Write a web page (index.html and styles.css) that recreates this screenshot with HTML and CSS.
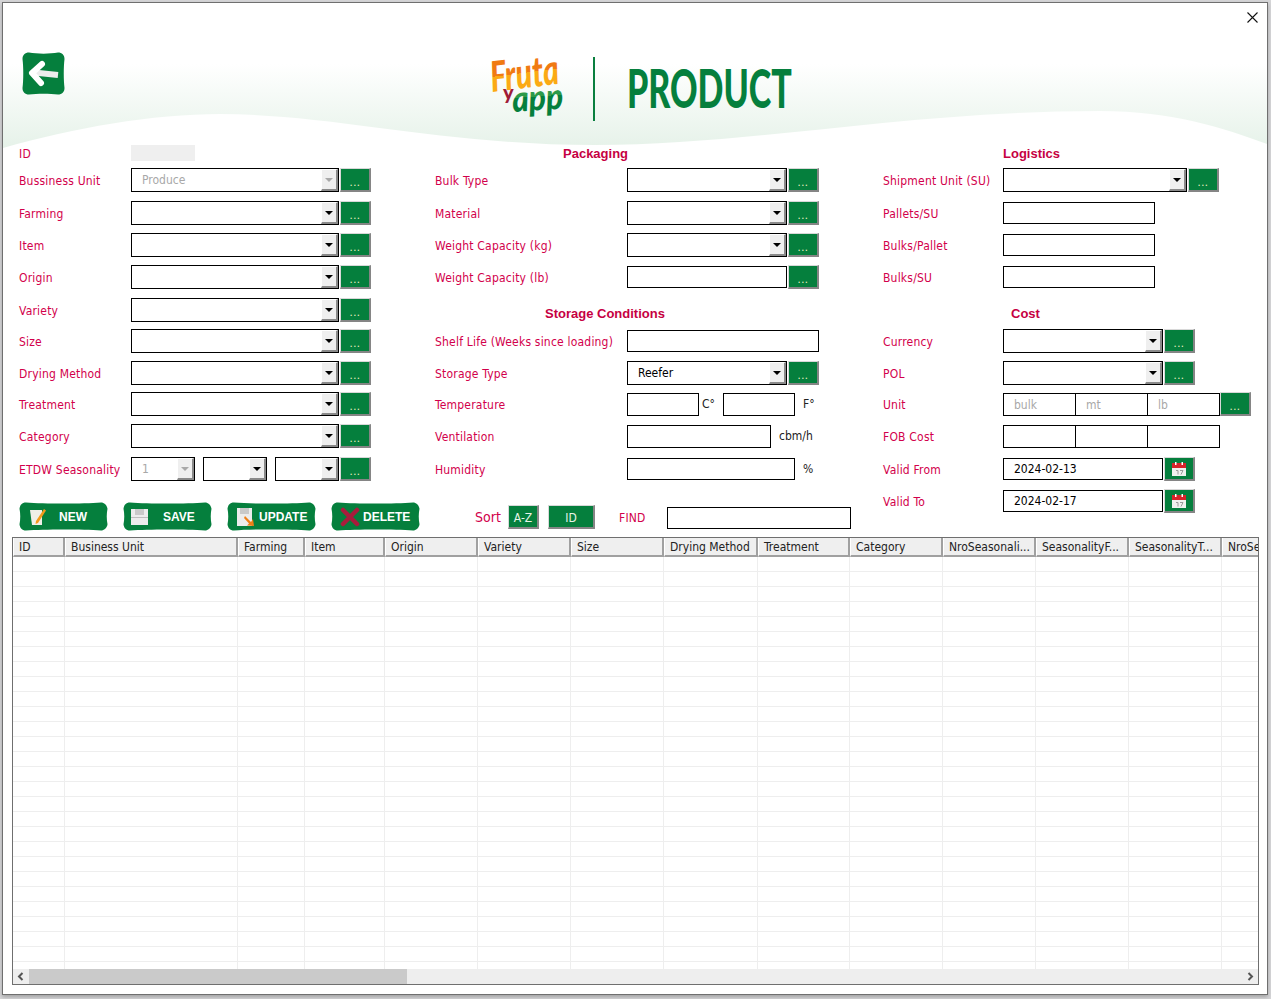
FILE: index.html
```html
<!DOCTYPE html>
<html lang="en">
  <head>
    <meta charset="UTF-8" />
    <title>Product</title>
    <link rel="stylesheet" href="styles.css">
  </head>
  <body>
    <svg class="defs" width="0" height="0">
      <symbol id="btn-shape" viewBox="0 0 89 30" preserveAspectRatio="none">
        <path d="M7 0.5C25 2 64 2 82 0.5C85 0.5 88 3 88.5 7C87.5 12 87.5 18 88.5 23C88 27 85 29.5 82 29.5C64 28 25 28 7 29.5C3 29.5 1 27 0.5 23C1.5 18 1.5 12 0.5 7C1 3 3 0.5 7 0.5Z" fill="#057f3d"/>
      </symbol>
      <symbol id="cal" viewBox="0 0 16 16">
        <rect x="1" y="2" width="14" height="13" fill="#f1f1ee"/>
        <rect x="1" y="2" width="14" height="5" fill="#d8232a"/>
        <rect x="4" y="1" width="1.5" height="3" fill="#fff"/>
        <rect x="10.5" y="1" width="1.5" height="3" fill="#fff"/>
        <path d="M5 9.5h2v4M9 9.5h3l-2 4" fill="none" stroke="#9a9a9a" stroke-width="1"/>
      </symbol>
    </svg>

    <div class="window">
      <button class="close" aria-label="Close">
        <svg width="11" height="11" viewBox="0 0 11 11"><path d="M0.5 0.5L10.5 10.5M10.5 0.5L0.5 10.5" stroke="#111" stroke-width="1.1"/></svg>
      </button>

      <header class="header">
        <svg class="wave" width="1264" height="146" viewBox="0 0 1264 146">
          <defs>
            <linearGradient id="wave-fill" x1="0" y1="0" x2="0" y2="1">
              <stop offset="0.42" stop-color="#ffffff"/>
              <stop offset="1" stop-color="#e6f2e9"/>
            </linearGradient>
          </defs>
          <path d="M0 145C70 125 150 111 217 111C330 111 440 142 592 142C750 142 900 108 1097 108C1170 108 1220 125 1264 141V0H0Z" fill="url(#wave-fill)"/>
        </svg>

        <a class="back" aria-label="Back">
          <svg width="43" height="43" viewBox="0 0 43 43">
            <path d="M7 0.5C15 2 28 2 36 0.5C40 0.5 42.5 3 42.5 7C41.5 15 41.5 28 42.5 36C42.5 40 40 42.5 36 42.5C28 41.5 15 41.5 7 42.5C3 42.5 0.5 40 0.5 36C1.5 28 1.5 15 0.5 7C0.5 3 3 0.5 7 0.5Z" fill="#057f3d"/>
            <path d="M36 23L12 20.5" stroke="#ececec" stroke-width="6" fill="none"/>
            <path d="M20 12L10 21L19 31" stroke="#fff" stroke-width="6" fill="none" stroke-linecap="round" stroke-linejoin="round"/>
          </svg>
        </a>

        <svg class="logo" width="76" height="76" viewBox="0 0 76 76">
          <defs>
            <linearGradient id="fruta-fill" x1="0" y1="0" x2="0" y2="1">
              <stop offset="0.52" stop-color="#f07a12"/>
              <stop offset="0.52" stop-color="#fbaa14"/>
            </linearGradient>
            <linearGradient id="app-fill" x1="0" y1="0" x2="0" y2="1">
              <stop offset="0.5" stop-color="#2d9a4a"/>
              <stop offset="0.5" stop-color="#057f3d"/>
            </linearGradient>
          </defs>
          <text class="logo-fruta" transform="translate(2 38) rotate(-7) scale(0.72 1)">Fruta</text>
          <text class="logo-y" x="13" y="46">y</text>
          <text class="logo-app" transform="translate(23 58) rotate(-4) scale(0.88 1)">app</text>
        </svg>
        <div class="divider"></div>
        <svg class="title" width="172" height="76" viewBox="0 0 172 76">
          <text transform="translate(0 60) scale(0.63 1)">PRODUCT</text>
        </svg>
      </header>

      <div class="form">
        <section class="col col-a">
          <label class="short">ID</label>
          <div class="ctl"><div class="id-box"></div></div>

          <label>Bussiness Unit</label>
          <div class="ctl"><div class="combo off w208"><span>Produce</span><i></i></div><button class="dots">...</button></div>
          <label>Farming</label>
          <div class="ctl"><div class="combo w208"><span></span><i></i></div><button class="dots">...</button></div>
          <label>Item</label>
          <div class="ctl"><div class="combo w208"><span></span><i></i></div><button class="dots">...</button></div>
          <label>Origin</label>
          <div class="ctl"><div class="combo w208"><span></span><i></i></div><button class="dots">...</button></div>
          <label>Variety</label>
          <div class="ctl"><div class="combo w208"><span></span><i></i></div><button class="dots">...</button></div>
          <label>Size</label>
          <div class="ctl"><div class="combo w208"><span></span><i></i></div><button class="dots">...</button></div>
          <label>Drying Method</label>
          <div class="ctl"><div class="combo w208"><span></span><i></i></div><button class="dots">...</button></div>
          <label>Treatment</label>
          <div class="ctl"><div class="combo w208"><span></span><i></i></div><button class="dots">...</button></div>
          <label>Category</label>
          <div class="ctl"><div class="combo w208"><span></span><i></i></div><button class="dots">...</button></div>
          <label>ETDW Seasonality</label>
          <div class="ctl">
            <div class="combo off w64"><span>1</span><i></i></div>
            <div class="combo w64 ml8"><span></span><i></i></div>
            <div class="combo w64 ml8"><span></span><i></i></div>
            <button class="dots">...</button>
          </div>
        </section>

        <section class="col col-b">
          <h3 class="head head-packaging">Packaging</h3>
          <label>Bulk Type</label>
          <div class="ctl"><div class="combo w160"><span></span><i></i></div><button class="dots">...</button></div>
          <label>Material</label>
          <div class="ctl"><div class="combo w160"><span></span><i></i></div><button class="dots">...</button></div>
          <label>Weight Capacity (kg)</label>
          <div class="ctl"><div class="combo w160"><span></span><i></i></div><button class="dots">...</button></div>
          <label>Weight Capacity (lb)</label>
          <div class="ctl"><input class="field w160"><button class="dots">...</button></div>
          <h3 class="head head-storage">Storage Conditions</h3>
          <label>Shelf Life (Weeks since loading)</label>
          <div class="ctl"><input class="field w192"></div>
          <label>Storage Type</label>
          <div class="ctl"><div class="combo w160"><span>Reefer</span><i></i></div><button class="dots">...</button></div>
          <label>Temperature</label>
          <div class="ctl"><input class="field tall w72"><span class="unit u-c">C°</span><input class="field tall w72"><span class="unit u-f">F°</span></div>
          <label>Ventilation</label>
          <div class="ctl"><input class="field tall w144"><span class="unit u-f">cbm/h</span></div>
          <label>Humidity</label>
          <div class="ctl"><input class="field w168"><span class="unit u-f">%</span></div>
        </section>

        <section class="col col-c">
          <h3 class="head head-logistics">Logistics</h3>
          <label>Shipment Unit (SU)</label>
          <div class="ctl"><div class="combo w184"><span></span><i></i></div><button class="dots">...</button></div>
          <label>Pallets/SU</label>
          <div class="ctl"><input class="field w152"></div>
          <label>Bulks/Pallet</label>
          <div class="ctl"><input class="field w152"></div>
          <label>Bulks/SU</label>
          <div class="ctl"><input class="field w152"></div>
          <h3 class="head head-cost">Cost</h3>
          <label>Currency</label>
          <div class="ctl"><div class="combo w160"><span></span><i></i></div><button class="dots">...</button></div>
          <label>POL</label>
          <div class="ctl"><div class="combo w160"><span></span><i></i></div><button class="dots">...</button></div>
          <label>Unit</label>
          <div class="ctl">
            <div class="triple"><input class="field tall" placeholder="bulk"><input class="field tall" placeholder="mt"><input class="field tall" placeholder="lb"></div>
            <button class="dots">...</button>
          </div>
          <label>FOB Cost</label>
          <div class="ctl">
            <div class="triple"><input class="field tall"><input class="field tall"><input class="field tall"></div>
          </div>
          <label>Valid From</label>
          <div class="ctl"><input class="field w160" value="2024-02-13"><button class="dots"><svg width="16" height="16"><use href="#cal"/></svg></button></div>
          <label>Valid To</label>
          <div class="ctl"><input class="field w160" value="2024-02-17"><button class="dots"><svg width="16" height="16"><use href="#cal"/></svg></button></div>
        </section>

        <div class="toolbar">
          <button class="action">
            <svg class="action-bg"><use href="#btn-shape"/></svg>
            <svg class="action-icon" width="20" height="20" viewBox="0 0 20 20">
              <path d="M2 3H14V18H4Z" fill="#efefe8"/>
              <path d="M16 2L18 3.5L10 16L7.5 17L8 14Z" fill="#f39a1c"/>
            </svg>
            <span class="action-new">NEW</span>
          </button>
          <button class="action">
            <svg class="action-bg"><use href="#btn-shape"/></svg>
            <svg class="action-icon icon-save" width="20" height="20" viewBox="0 0 20 20">
              <path d="M1 2H18V18H1Z" fill="#ececec"/>
              <path d="M5 2H14V8H5Z" fill="#c9c9c9"/>
              <path d="M1 10H18V11H1Z" fill="#bdbdbd"/>
            </svg>
            <span class="action-save">SAVE</span>
          </button>
          <button class="action">
            <svg class="action-bg"><use href="#btn-shape"/></svg>
            <svg class="action-icon" width="20" height="20" viewBox="0 0 20 20">
              <path d="M1 1H16V19H1Z" fill="#ececec"/>
              <path d="M4 1H13V7H4Z" fill="#c9c9c9"/>
              <path d="M9 9L15 15L17 12L18 19L11 18.500L13 16.500L8 11Z" fill="#ee7f17"/>
            </svg>
            <span class="action-update">UPDATE</span>
          </button>
          <button class="action">
            <svg class="action-bg"><use href="#btn-shape"/></svg>
            <svg class="action-icon" width="20" height="20" viewBox="0 0 20 20">
              <path d="M3 3L17 17M17 3L3 17" stroke="#a81c3c" stroke-width="4.500" stroke-linecap="round"/>
            </svg>
            <span class="action-delete">DELETE</span>
          </button>

          <span class="sort-label">Sort</span>
          <button class="sort-btn az">A-Z</button>
          <button class="sort-btn by-id">ID</button>
          <label class="find-label">FIND</label>
          <input class="field find">
        </div>
      </div>

      <div class="gridview">
        <div class="grid-table">
          <div class="th">ID</div>
          <div class="th">Business Unit</div>
          <div class="th">Farming</div>
          <div class="th">Item</div>
          <div class="th">Origin</div>
          <div class="th">Variety</div>
          <div class="th">Size</div>
          <div class="th">Drying Method</div>
          <div class="th">Treatment</div>
          <div class="th">Category</div>
          <div class="th">NroSeasonali...</div>
          <div class="th">SeasonalityF...</div>
          <div class="th">SeasonalityT...</div>
          <div class="th">NroSeasonali...</div>
          <div class="td"></div><div class="td"></div><div class="td"></div><div class="td"></div>
          <div class="td"></div><div class="td"></div><div class="td"></div><div class="td"></div>
          <div class="td"></div><div class="td"></div><div class="td"></div><div class="td"></div>
          <div class="td"></div><div class="td"></div>
        </div>
        <div class="scrollbar">
          <svg class="scroll-arrow" width="16" height="15" viewBox="0 0 16 15"><path d="M9.500 4L6 7.500L9.500 11" fill="none" stroke="#555" stroke-width="2"/></svg>
          <div class="scroll-thumb"></div>
          <svg class="scroll-arrow" width="16" height="15" viewBox="0 0 16 15"><path d="M6.500 4L10 7.500L6.500 11" fill="none" stroke="#555" stroke-width="2"/></svg>
        </div>
      </div>
    </div>
  </body>
</html>
```

FILE: styles.css
```css
* {
  box-sizing: border-box;
}
body {
  margin: 0;
  height: 999px;
  overflow: hidden;
  background: #d6d6d8;
  font-family: "DejaVu Sans Condensed", "DejaVu Sans", sans-serif;
  font-stretch: condensed;
  font-size: 12px;
}
.defs {
  position: absolute;
}
button {
  font-family: inherit;
  padding: 0;
}
.window {
  position: relative;
  width: 1266px;
  height: 993px;
  margin: 2px 0 0 2px;
  background: #fff;
  border: 1px solid #6f6f6f;
  box-shadow: 0 2px 4px rgba(0, 0, 0, 0.25);
}
.close {
  position: absolute;
  top: 9px;
  right: 9px;
  width: 11px;
  height: 11px;
  border: 0;
  background: none;
  display: flex;
  z-index: 2;
}

/* header */
.header {
  position: relative;
  height: 142px;
  display: flex;
  align-items: flex-start;
}
.wave {
  position: absolute;
  top: 0;
  left: 0;
}
.back,
.logo,
.divider,
.title {
  position: relative;
}
.back {
  display: block;
  width: 43px;
  height: 43px;
  margin: 49px 0 0 19px;
}
.logo {
  margin: 51px 0 0 425px;
  overflow: visible;
}
.logo-fruta {
  font: italic 900 42px Lato, sans-serif;
  fill: url(#fruta-fill);
}
.logo-y {
  font: 900 20px Lato, sans-serif;
  fill: #a01c38;
}
.logo-app {
  font: italic 900 36px Lato, sans-serif;
  fill: url(#app-fill);
}
.divider {
  width: 2px;
  height: 64px;
  margin: 54px 0 0 27px;
  background: #0a7f3f;
}
.title {
  margin: 45px 0 0 32px;
  overflow: visible;
}
.title text {
  font: 900 54px Lato, sans-serif;
  fill: #057f3d;
}

/* form */
.form {
  position: relative;
  display: grid;
  grid-template-columns: 416px 448px 1fr;
  grid-template-rows: 344px 48px;
  height: 392px;
  padding-left: 16px;
}
.col {
  display: grid;
  grid-template-rows: 23px 33px 32px 32px 33px 31px 32px 31px 32px 33px 32px 24px;
  align-content: start;
}
.col-a {
  grid-column: 1;
  grid-row: 1;
  grid-template-columns: 112px 1fr;
}
.col-b {
  grid-column: 2;
  grid-row: 1;
  grid-template-columns: 192px 1fr;
}
.col-c {
  grid-column: 3;
  grid-row: 1 / 3;
  grid-template-columns: 120px 1fr;
}
label {
  padding-top: 1px;
  color: #d2004b;
  line-height: 24px;
  letter-spacing: 0.2px;
  white-space: nowrap;
}
label.short {
  line-height: 17px;
}
.head {
  grid-column: 1 / -1;
  margin: 0;
  color: #c60042;
  font: bold 13px/17px "Liberation Sans", Arial, sans-serif;
}
.head-packaging {
  padding-left: 128px;
}
.head-storage {
  padding-left: 110px;
  line-height: 31px;
}
.head-logistics {
  padding-left: 120px;
}
.head-cost {
  padding-left: 128px;
  line-height: 31px;
}
.ctl {
  display: flex;
  align-items: flex-start;
}
.id-box {
  width: 64px;
  height: 16px;
  background: #efefef;
}
.combo {
  display: flex;
  height: 24px;
  border: 1px solid #000;
  background: #fff;
  line-height: 22px;
}
.combo span {
  flex: 1;
  padding-left: 10px;
}
.combo i {
  display: flex;
  align-items: center;
  justify-content: center;
  width: 17px;
  background: #efefef;
  border-style: solid;
  border-width: 1px 2px 2px 1px;
  border-color: #fff #8a8a8a #8a8a8a #fff;
}
.combo i::after {
  content: "";
  border-style: solid;
  border-width: 4px 4px 0;
  border-color: #000 transparent transparent;
}
.combo.off {
  color: #a8a8a8;
}
.combo.off i::after {
  border-top-color: #a8a8a8;
}
.w64 { width: 64px; }
.w72 { width: 72px; }
.w144 { width: 144px; }
.w152 { width: 152px; }
.w160 { width: 160px; }
.w168 { width: 168px; }
.w184 { width: 184px; }
.w192 { width: 192px; }
.w208 { width: 208px; }
.ml8 { margin-left: 8px; }
.field {
  height: 22px;
  margin-top: 1px;
  padding: 0 10px 1px;
  border: 1px solid #000;
  border-radius: 0;
  background: #fff;
  color: #000;
  font-family: inherit;
  font-stretch: inherit;
  font-size: 12px;
  outline: none;
}
.field.tall {
  height: 23px;
  padding-bottom: 0;
}
.field::placeholder {
  color: #a8a8a8;
  opacity: 1;
}
.triple {
  display: flex;
  width: 217px;
}
.triple .field {
  flex: 1;
  min-width: 0;
  margin-right: -1px;
}
.triple .field:last-child {
  margin-right: 0;
}
.triple + .dots {
  margin-left: 0;
}
.dots {
  display: flex;
  align-items: center;
  justify-content: center;
  width: 31px;
  height: 24px;
  margin-left: 1px;
  padding-top: 6px;
  background: #057f3d;
  border-style: solid;
  border-width: 1px 2px 2px 1px;
  border-color: #d8d8d8 #858585 #858585 #d8d8d8;
  color: #f5f5c8;
  font-size: 11px;
  letter-spacing: 0.5px;
}
.dots svg {
  margin-top: -6px;
}
.unit {
  margin-top: 1px;
  line-height: 22px;
  color: #222;
}
.u-c {
  width: 24px;
  padding-left: 3px;
}
.u-f {
  padding-left: 8px;
}

/* buttons above the grid */
.toolbar {
  grid-column: 1 / 3;
  grid-row: 2;
  display: flex;
  align-items: center;
  align-self: start;
  height: 29px;
  margin-top: 13px;
}
.action {
  position: relative;
  display: block;
  width: 89px;
  height: 29px;
  margin-right: 15px;
  border: 0;
  background: none;
  color: #fff;
  font: bold 12px "Liberation Sans", Arial, sans-serif;
}
.action-bg {
  position: absolute;
  top: 0;
  left: 0;
  width: 89px;
  height: 29px;
}
.action-icon {
  position: absolute;
  top: 5px;
  left: 9px;
}
.action-icon.icon-save {
  left: 7px;
}
.action span {
  position: absolute;
  top: 8px;
  white-space: nowrap;
}
.action-new { left: 40px; }
.action-save { left: 40px; }
.action-update { left: 32px; }
.action-delete { left: 32px; }
.sort-label {
  margin-left: 40px;
  width: 33px;
  color: #d2004b;
  font-size: 14px;
}
.sort-btn {
  height: 24px;
  padding-top: 3px;
  background: #057f3d;
  border-style: solid;
  border-width: 1px 2px 2px 1px;
  border-color: #d8d8d8 #858585 #858585 #d8d8d8;
  color: #e8f4e8;
  font-size: 12px;
  font-stretch: inherit;
}
.az {
  width: 31px;
}
.by-id {
  width: 47px;
  margin-left: 9px;
}
.find-label {
  width: 48px;
  margin-left: 24px;
  padding-top: 2px;
}
.find {
  width: 184px;
  margin-top: 3px;
}

/* data grid */
.gridview {
  display: flex;
  flex-direction: column;
  width: 1247px;
  height: 448px;
  margin-left: 9px;
  border: 1px solid #6f6f6f;
}
.grid-table {
  flex: 1;
  min-height: 0;
  display: grid;
  grid-template-columns: 52px 173px 67px 80px 93px 93px 93px 94px 92px 93px 93px 93px 93px 93px;
  grid-template-rows: 19px 1fr;
  overflow: hidden;
  background-image: repeating-linear-gradient(to bottom, transparent 0, transparent 14px, #eeeeee 14px, #eeeeee 15px);
  background-position: 0 19px;
}
.th {
  padding: 2px 0 0 5px;
  background: #efefef;
  border-style: solid;
  border-width: 0 2px 2px 0;
  border-color: #a0a0a0;
  border-left: 1px solid #fff;
  color: #222;
  line-height: 15px;
  white-space: nowrap;
  overflow: hidden;
}
.td {
  border-right: 1px solid #eeeeee;
}
.scrollbar {
  display: flex;
  align-items: center;
  height: 15px;
  background: #eeeeee;
}
.scroll-thumb {
  width: 378px;
  height: 15px;
  margin-right: auto;
  background: #cacaca;
}
```
